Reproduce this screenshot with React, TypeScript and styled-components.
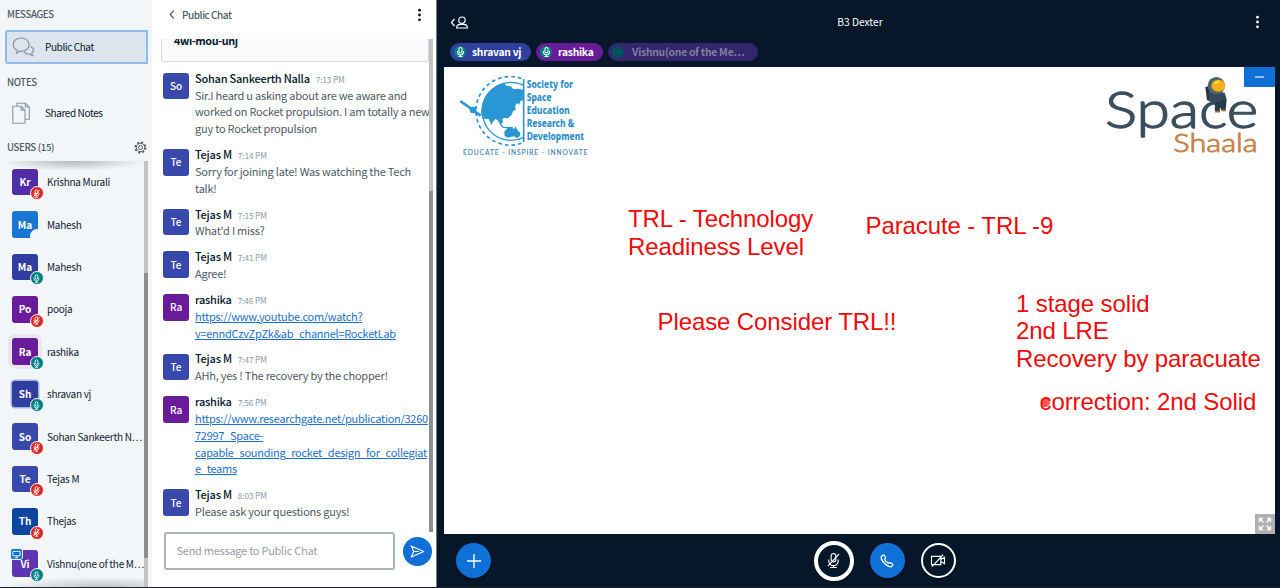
import React from 'react';
import styled, { createGlobalStyle, css } from 'styled-components';

const GlobalStyle = createGlobalStyle`
  * { box-sizing: border-box; }
  html, body { margin: 0; padding: 0; overflow: hidden; }
  body { background: #06172a; font-family: 'Noto Sans CJK SC', 'Noto Sans', sans-serif; }
  button { padding: 0; font: inherit; cursor: pointer; }
`;

const Shell = styled.div`
  display: flex;
  width: 1280px;
  height: 588px;
  overflow: hidden;
  border-bottom: 1px solid #1b2127;
`;

/* ---------- sidebar ---------- */

const Sidebar = styled.aside`
  display: flex;
  flex-direction: column;
  flex: none;
  width: 152px;
  background: #f3f6f9;
  color: #06172a;
`;

const SectionTitle = styled.h2<{ $top: number; $bottom?: number }>`
  display: flex;
  align-items: center;
  justify-content: space-between;
  flex: none;
  height: 16px;
  margin: ${(p) => p.$top}px 5px ${(p) => p.$bottom || 0}px 7px;
  font-size: 9.6px;
  font-weight: 500;
  line-height: 16px;
  letter-spacing: -0.33px;
  color: #4e5a66;
`;

const NavItem = styled.div<{ $active?: boolean }>`
  display: flex;
  align-items: center;
  gap: 10px;
  flex: none;
  height: 34px;
  margin: 0 4px 0 5px;
  padding-left: 5px;
  font-size: 10px;
  letter-spacing: -0.4px;
  line-height: 16px;
  border: 2px solid transparent;
  ${(p) => p.$active && css`
    background: #dce4ed;
    border-color: #8fbaea;
    border-radius: 3px 0 0 3px;
  `}
  svg { width: 23px; height: 24px; }
`;

const UserScroller = styled.div`
  display: flex;
  flex: 1;
  min-height: 0;
  margin-top: 6px;
  overflow: hidden;
  background:
    radial-gradient(farthest-side at 50% 0, rgba(0, 0, 0, 0.25), rgba(0, 0, 0, 0)) 0 0 / 146px 10px no-repeat,
    radial-gradient(farthest-side at 70% 100%, rgba(0, 0, 0, 0.2), rgba(0, 0, 0, 0)) 0 100% / 146px 10px no-repeat;
`;

const UserList = styled.div`
  flex: 1;
  min-width: 0;
`;

const UserRow = styled.div`
  display: flex;
  align-items: center;
  gap: 9px;
  height: 42.4px;
  padding-left: 12px;
`;

const UserName = styled.span`
  font-size: 10px;
  letter-spacing: -0.28px;
  line-height: 18px;
  white-space: nowrap;
  color: #0f2133;
`;

const Avatar = styled.div<{ $color: string; $halo?: string; $bold?: boolean }>`
  position: relative;
  display: flex;
  align-items: center;
  justify-content: center;
  flex: none;
  width: 26px;
  height: 26.6px;
  border-radius: 3px;
  background: ${(p) => p.$color};
  box-shadow: ${(p) => p.$halo || 'none'};
  color: #fff;
  font-size: 10px;
  font-weight: ${(p) => (p.$bold ? 700 : 500)};
  line-height: 18px;
`;

const AudioBadge = styled.span<{ $kind: string }>`
  position: absolute;
  right: -5.5px;
  bottom: -5px;
  display: flex;
  align-items: center;
  justify-content: center;
  width: 14px;
  height: 14px;
  border: 1px solid #f3f6f9;
  border-radius: 50%;
  background: ${(p) => ({ muted: '#df2721', live: '#008081', none: '#f3f6f9' } as Record<string, string>)[p.$kind]};
  svg { width: 9px; height: 9px; }
`;

const PresenterBadge = styled.span`
  position: absolute;
  left: -2px;
  top: -2px;
  display: flex;
  align-items: center;
  justify-content: center;
  width: 13px;
  height: 12px;
  border: 1px solid #f3f6f9;
  border-radius: 3px;
  background: #0f70d7;
  svg { width: 9px; height: 9px; }
`;

const Track = styled.div<{ $before: number; $thumb: number; $right: number }>`
  display: flow-root;
  flex: none;
  width: 4px;
  margin-right: ${(p) => p.$right}px;
  background: #c1c3c5;
  &::before {
    content: '';
    display: block;
    height: ${(p) => p.$thumb}px;
    margin-top: ${(p) => p.$before}px;
    background: #8c8e90;
  }
`;

/* ---------- chat ---------- */

const Chat = styled.section`
  display: flex;
  flex-direction: column;
  flex: none;
  width: 285px;
  background: #fff;
  border-right: 1px solid #6e7c87;
`;

const ChatHeader = styled.header`
  display: flex;
  align-items: center;
  flex: none;
  height: 39px;
  padding: 0 14px 10px 17px;
  font-size: 10px;
  font-weight: 500;
  letter-spacing: -0.45px;
  line-height: 16px;
  color: #4e5a66;
`;

const HeaderLabel = styled.span`
  flex: 1;
  margin-left: 7px;
`;

const ChatBody = styled.div`
  display: flex;
  flex: none;
  height: 493px;
  overflow: hidden;
`;

const MessageList = styled.div`
  flex: 1;
  min-width: 0;
  padding-left: 11px;
`;

const Welcome = styled.div`
  height: 23px;
  margin: 0 0 7.8px -2px;
  padding-left: 12px;
  overflow: hidden;
  background: #f9fbfc;
  border: 1px solid #d4d9df;
  border-top: 0;
  border-radius: 0 0 3px 3px;
  font-size: 10.8px;
  letter-spacing: -0.4px;
  font-weight: 700;
  line-height: 16px;
  color: #06172a;
`;

const WelcomeText = styled.div`
  margin-top: -7px;
`;

const Message = styled.article`
  display: flex;
  gap: 6px;
  margin-bottom: 9.1px;
  & > :first-child { margin-top: 3.1px; }
`;

const MessageContent = styled.div`
  width: 234px;
  line-height: 16.8px;
`;

const Sender = styled.div`
  display: flex;
  align-items: baseline;
  gap: 6px;
  height: 16.8px;
  font-size: 11px;
  font-weight: 500;
  letter-spacing: -0.24px;
  color: #06172a;
`;

const Time = styled.time`
  font-size: 8.3px;
  font-weight: 400;
  letter-spacing: -0.15px;
  color: #8b9aa8;
`;

const Line = styled.div<{ $link?: boolean }>`
  height: 16.8px;
  font-size: 11px;
  letter-spacing: ${(p) => (p.$link ? -0.27 : -0.23)}px;
  white-space: nowrap;
  color: ${(p) => (p.$link ? '#1b6fd0' : '#4e5a66')};
  text-decoration: ${(p) => (p.$link ? 'underline' : 'none')};
  text-underline-offset: 1px;
`;

const Composer = styled.div`
  display: flex;
  align-items: center;
  gap: 8px;
  height: 38px;
  padding-left: 11.5px;
`;

const Input = styled.div`
  width: 231px;
  height: 38px;
  padding-left: 11px;
  border: 2px solid #a7b3bd;
  border-radius: 3px;
  font-size: 11px;
  letter-spacing: -0.26px;
  line-height: 32px;
  color: #96a0a9;
`;

const SendButton = styled.button`
  display: flex;
  align-items: center;
  justify-content: center;
  width: 29px;
  height: 29px;
  border: 0;
  border-radius: 50%;
  background: #0f70d7;
`;

/* ---------- meeting area ---------- */

const Main = styled.main`
  display: flex;
  flex-direction: column;
  flex: 1;
  min-width: 0;
  background: #06172a;
`;

const TopBar = styled.header`
  display: flex;
  align-items: center;
  justify-content: space-between;
  flex: none;
  height: 43px;
  padding: 1px 20px 0 13px;
  font-size: 10.2px;
  line-height: 16px;
  color: #fff;
`;

const MeetingTitle = styled.span`
  margin-right: 4px;
`;

const Talkers = styled.div`
  display: flex;
  gap: 5px;
  height: 24px;
  padding-left: 13px;
`;

const Talker = styled.div<{ $color: string; $width: number; $dim?: boolean }>`
  display: flex;
  align-items: center;
  gap: 5px;
  width: ${(p) => p.$width}px;
  height: 18px;
  padding-left: 4px;
  border-radius: 9px;
  background: ${(p) => p.$color};
  color: ${(p) => (p.$dim ? '#82809c' : '#fff')};
  font-size: 10.3px;
  font-weight: 700;
  letter-spacing: -0.24px;
  line-height: 16px;
  white-space: nowrap;
`;

const TalkerIcon = styled.span<{ $dim?: boolean }>`
  display: flex;
  align-items: center;
  justify-content: center;
  width: 12px;
  height: 12px;
  margin-right: ${(p) => (p.$dim ? 3 : 1)}px;
  border-radius: 50%;
  background: ${(p) => (p.$dim ? '#03525b' : '#008081')};
  svg { width: 11px; height: 12px; }
`;

const Whiteboard = styled.div`
  position: relative;
  flex: none;
  width: 831px;
  height: 467px;
  margin-left: 7px;
  background: #fff;
`;

const Note = styled.div<{ $x: number; $y: number }>`
  position: absolute;
  left: ${(p) => p.$x}px;
  top: ${(p) => p.$y}px;
  font-family: 'Liberation Sans', Arial, sans-serif;
  font-size: 24px;
  line-height: 27.5px;
  letter-spacing: -0.1px;
  white-space: pre;
  color: #f00a0a;
`;

const Pointer = styled.span`
  position: absolute;
  left: 597px;
  top: 331px;
  width: 9px;
  height: 9px;
  border-radius: 50%;
  background: rgba(255, 30, 30, 0.75);
`;

const SocietyLogo = styled.svg`
  position: absolute;
  left: 6px;
  top: 3px;
  width: 150px;
  height: 95px;
`;

const ShaalaLogo = styled.svg`
  position: absolute;
  left: 656px;
  top: 3px;
  width: 162px;
  height: 90px;
`;

const Minimize = styled.button`
  position: absolute;
  right: 0;
  top: 0;
  display: flex;
  align-items: center;
  justify-content: center;
  width: 31px;
  height: 20px;
  border: 0;
  border-radius: 0 0 1px 1px;
  background: #0f70d7;
  &::before {
    content: '';
    width: 9px;
    height: 1.5px;
    background: #8fc0f0;
  }
`;

const Fullscreen = styled.button`
  position: absolute;
  right: 0;
  bottom: 0;
  display: flex;
  align-items: center;
  justify-content: center;
  width: 20px;
  height: 20px;
  border: 0;
  background: #b2b2b2;
`;

const ActionBar = styled.footer`
  display: grid;
  grid-template-columns: 1fr auto 1fr;
  align-items: center;
  flex: 1;
  padding: 0 16px 0 19px;
`;

const Media = styled.div`
  display: flex;
  align-items: center;
  gap: 16px;
  margin-left: 49px;
`;

const Round = styled.button<{ $kind: 'solid' | 'outline' | 'focus' }>`
  display: flex;
  align-items: center;
  justify-content: center;
  flex: none;
  width: ${(p) => (p.$kind === 'focus' ? 40 : 35)}px;
  height: ${(p) => (p.$kind === 'focus' ? 40 : 35)}px;
  border-radius: 50%;
  border: ${(p) => ({ solid: '0', outline: '2px solid #fff', focus: '4px solid #fff' })[p.$kind]};
  background: ${(p) => (p.$kind === 'solid' ? '#0f70d7' : 'transparent')};
  box-shadow: 0 1px 3px rgba(0, 0, 0, 0.5);
  svg { flex: none; }
`;

/* ---------- icons ---------- */

const MicIcon = ({ off }: { off?: boolean }) => (
  <svg viewBox="0 0 12 12" fill="none" stroke="#fff" strokeWidth="1.1">
    <rect x="4.3" y="1" width="3.4" height="6" rx="1.7" />
    <path d="M2.8 5v1a3.2 3.2 0 0 0 6.4 0V5M6 9.2v1.8M3.8 11h4.4" />
    {off && <path d="M2 10.5L10 1.5" strokeWidth="1.3" />}
  </svg>
);

const Dots = ({ color }: { color: string }) => (
  <svg width="5" height="14" viewBox="0 0 5 14" fill={color}>
    <circle cx="2.5" cy="2.2" r="1.4" /><circle cx="2.5" cy="7" r="1.4" /><circle cx="2.5" cy="11.8" r="1.4" />
  </svg>
);

const ChatIcon = () => (
  <svg viewBox="0 0 23 24" fill="none" stroke="#8796a5" strokeWidth="1.2">
    <path d="M4 18.5c1-.7 1.5-1.7 1.3-3C2.800 14.300 1.300 12.200 1.300 9.600 1.300 5.500 4.700 3 9.100 3s7.900 2.700 7.900 6.700-3.500 6.700-7.900 6.700c-.6 0-1.300 0-1.900-.2-.7 1.200-1.800 2-3.200 2.300z" />
    <path d="M18.500 11.500c1.800.7 2.900 1.900 2.900 3.700 0 1.300-.6 2.300-1.600 3-.1 1.100.3 1.800 1 2.500-1.300 0-2.200-.6-2.800-1.700-2.700.3-5-.5-5.800-2.300" />
  </svg>
);

const NotesIcon = () => (
  <svg viewBox="0 0 23 24" fill="none" stroke="#8796a5" strokeWidth="1.1">
    <path d="M5 7V2.300h8.500l3.800 3.700v12.300H13M13.300 2.500V6h3.800" />
    <path d="M.8 5.300h8.400l3.800 3.800v13.200H.8zM9.200 5.500v3.600H13" fill="#f3f6f9" />
  </svg>
);

const GearIcon = () => (
  <svg width="13" height="13" viewBox="0 0 13 13" fill="none" stroke="#4e5a66">
    <circle cx="6.500" cy="6.500" r="4.200" />
    <circle cx="6.500" cy="6.500" r="2" />
    <circle cx="6.500" cy="6.500" r="5.300" strokeWidth="1.400" strokeDasharray="2.100 2.060" />
  </svg>
);

const MonitorIcon = () => (
  <svg viewBox="0 0 10 10" fill="none" stroke="#fff">
    <path d="M1 1.500h8v5H1zM5 6.500v2M3 8.700h4" />
  </svg>
);

/* ---------- data ---------- */

type User = [initials: string, name: string, color: string, audio: string, halo?: string];

const users: User[] = [
  ['Kr', 'Krishna Murali', '#512da8', 'muted'],
  ['Ma', 'Mahesh', '#1976d2', 'none'],
  ['Ma', 'Mahesh', '#303f9f', 'live'],
  ['Po', 'pooja', '#6a1b9a', 'muted'],
  ['Ra', 'rashika', '#6a1b9a', 'live', '0 0 0 4px #e9e6f1'],
  ['Sh', 'shravan vj', '#303f9f', 'live', '0 0 0 1.5px #a9aedb'],
  ['So', 'Sohan Sankeerth N…', '#3949ab', 'muted'],
  ['Te', 'Tejas M', '#3949ab', 'muted'],
  ['Th', 'Thejas', '#0d47a1', 'muted'],
  ['Vi', 'Vishnu(one of the M…', '#5e35b1', 'live'],
];

type Msg = { who: string; time: string; lines: string[]; link?: boolean };

const messages: Msg[] = [
  { who: 'Sohan Sankeerth Nalla', time: '7:13 PM', lines: ['Sir.I heard u asking about are we aware and', 'worked on Rocket propulsion. I am totally a new', 'guy to Rocket propulsion'] },
  { who: 'Tejas M', time: '7:14 PM', lines: ['Sorry for joining late! Was watching the Tech', 'talk!'] },
  { who: 'Tejas M', time: '7:15 PM', lines: ["What'd I miss?"] },
  { who: 'Tejas M', time: '7:41 PM', lines: ['Agree!'] },
  { who: 'rashika', time: '7:46 PM', link: true, lines: ['https://www.youtube.com/watch?', 'v=enndCzvZpZk&ab_channel=RocketLab'] },
  { who: 'Tejas M', time: '7:47 PM', lines: ['AHh, yes ! The recovery by the chopper!'] },
  { who: 'rashika', time: '7:56 PM', link: true, lines: ['https://www.researchgate.net/publication/3260', '72997_Space-', 'capable_sounding_rocket_design_for_collegiat', 'e_teams'] },
  { who: 'Tejas M', time: '8:03 PM', lines: ['Please ask your questions guys!'] },
];

const societyWords: [string, number, number][] = [
  ['Society for', 55, 139],
  ['Space', 94, 75],
  ['Education', 132, 129],
  ['Research &', 171, 143],
  ['Development', 209, 172],
];

export default function App() {
  return (
    <Shell>
      <GlobalStyle />
      <Sidebar>
        <SectionTitle $top={6} $bottom={8}>MESSAGES</SectionTitle>
        <NavItem $active><ChatIcon />Public Chat</NavItem>
        <SectionTitle $top={10} $bottom={6}>NOTES</SectionTitle>
        <NavItem><NotesIcon />Shared Notes</NavItem>
        <SectionTitle $top={9}>USERS (15)<GearIcon /></SectionTitle>
        <UserScroller>
          <UserList>
            {users.map(([initials, name, color, audio, halo]) => (
              <UserRow key={name + audio}>
                <Avatar $color={color} $halo={halo} $bold>
                  {initials}
                  {initials === 'Vi' && <PresenterBadge><MonitorIcon /></PresenterBadge>}
                  <AudioBadge $kind={audio}>{audio !== 'none' && <MicIcon off={audio === 'muted'} />}</AudioBadge>
                </Avatar>
                <UserName>{name}</UserName>
              </UserRow>
            ))}
          </UserList>
          <Track $before={112} $thumb={285} $right={4} />
        </UserScroller>
      </Sidebar>

      <Chat>
        <ChatHeader>
          <svg width="6" height="9" viewBox="0 0 6 9" fill="none" stroke="#4e5a66" strokeWidth="1.200"><path d="M4.800.7L1.200 4.500l3.600 3.800" /></svg>
          <HeaderLabel>Public Chat</HeaderLabel>
          <Dots color="#06172a" />
        </ChatHeader>
        <ChatBody>
          <MessageList>
            <Welcome><WelcomeText>4wi-mou-unj</WelcomeText></Welcome>
            {messages.map((m) => (
              <Message key={m.time}>
                <Avatar $color={m.who === 'rashika' ? '#6a1b9a' : '#3949ab'}>{m.who === 'rashika' ? 'Ra' : m.who.slice(0, 2)}</Avatar>
                <MessageContent>
                  <Sender>{m.who}<Time>{m.time}</Time></Sender>
                  {m.lines.map((l) => <Line key={l} $link={m.link}>{l}</Line>)}
                </MessageContent>
              </Message>
            ))}
          </MessageList>
          <Track $before={152} $thumb={341} $right={3} />
        </ChatBody>
        <Composer>
          <Input>Send message to Public Chat</Input>
          <SendButton>
            <svg width="15" height="13" viewBox="0 0 15 13" fill="none" stroke="#fff" strokeWidth="1.100" strokeLinejoin="round"><path d="M1.200 1l12.500 5.500L1.200 12l2.600-5.500zM3.800 6.500h5" /></svg>
          </SendButton>
        </Composer>
      </Chat>

      <Main>
        <TopBar>
          <svg width="19" height="13" viewBox="0 0 19 13" fill="none" stroke="#fff" strokeWidth="1.200">
            <path d="M4.500 3L1.500 6.500l3 3.500" />
            <circle cx="12" cy="4.200" r="3.200" />
            <path d="M6.600 12c0-2.600 1.700-3.700 3.600-3.700h3.600c1.900 0 3.600 1.100 3.600 3.700z" />
          </svg>
          <MeetingTitle>B3 Dexter</MeetingTitle>
          <Dots color="#fff" />
        </TopBar>
        <Talkers>
          <Talker $color="#303f9f" $width={81}><TalkerIcon><MicIcon /></TalkerIcon>shravan vj</Talker>
          <Talker $color="#6a1b9a" $width={67}><TalkerIcon><MicIcon /></TalkerIcon>rashika</Talker>
          <Talker $color="#32266e" $width={150} $dim><TalkerIcon $dim />Vishnu(one of the Me…</Talker>
        </Talkers>

        <Whiteboard>
          <SocietyLogo viewBox="0 0 450 285">
            <g fill="none" stroke="#2897d3">
              <path d="M214 25A103 103 0 1 0 214 220" strokeWidth="5" strokeDasharray="11 9" />
              <path d="M222 46A87 87 0 1 0 222 202" strokeWidth="4" />
              <path d="M221 27V216" strokeWidth="5" />
              <path d="M31 93L92 137" strokeWidth="8" />
              <path d="M148 150l4 14 8 8 22 2" strokeWidth="4" />
            </g>
            <g fill="#2897d3">
              <circle cx="69" cy="120" r="10" />
              <path d="M95 138A87 87 0 0 1 151 43l11-3 8 8 12 1 8 9 14-2 17 4V91l-9 1-5 12-7-5-5 11 3 9-8 3-6 14-11 9-12-1-4 4 2 8-7 8-9-13-7-4-8 10-3 8-9-18-15-1z" />
              <path d="M163 184l7-6 5-8 12 1 5 7 5-9 5 11 8 8 1 8-8 8-13-5-16 4-10-5z" />
            </g>
            <g fill="#2c8fc9" fontFamily="'Noto Sans', sans-serif" fontWeight="800" fontSize="29">
              {societyWords.map(([w, y, len]) => <text key={w} x="230" y={y} textLength={len} lengthAdjust="spacingAndGlyphs">{w}</text>)}
            </g>
            <text x="39" y="254" textLength="373" fill="#4488ae" fontFamily="Lato, sans-serif" fontWeight="400" stroke="#4488ae" strokeWidth="0.400" fontSize="20">EDUCATE - INSPIRE - INNOVATE</text>
          </SocietyLogo>

          <ShaalaLogo viewBox="60 210 486 270">
            <text x="75" y="385" textLength="460" lengthAdjust="spacingAndGlyphs" fill="#3b4f5d" stroke="#3b4f5d" strokeWidth="4" strokeLinejoin="round" fontFamily="Lato, sans-serif" fontWeight="300" fontSize="152">Space</text>
            <text x="280" y="455" textLength="253" lengthAdjust="spacingAndGlyphs" fill="#c98247" stroke="#c98247" strokeWidth="2.500" strokeLinejoin="round" fontFamily="Lato, sans-serif" fontWeight="300" fontSize="74">Shaala</text>
            <path d="M376 261l14-3 4 48-13-6z" fill="#26323e" />
            <path d="M386 270l48 8 6 20-2 24-30 4-4-16-18-8z" fill="#34495c" />
            <path d="M412 306v27M430 300v30" stroke="#263849" strokeWidth="15" />
            <path d="M405 335h15M424 331h14" stroke="#a86745" strokeWidth="5" />
            <circle cx="409" cy="257" r="26" fill="#4d646b" />
            <ellipse cx="415" cy="257" rx="21" ry="18" fill="#f5ae17" />
            <path d="M404 252q5-8 14-6" stroke="#ffe05a" strokeWidth="5" fill="none" />
          </ShaalaLogo>

          <Note $x={184} $y={138}>{'TRL - Technology\nReadiness Level'}</Note>
          <Note $x={421.5} $y={144.500}>Paracute - TRL -9</Note>
          <Note $x={213.5} $y={241}>Please Consider TRL!!</Note>
          <Note $x={572} $y={222.9}>{'1 stage solid\n2nd LRE\nRecovery by paracuate'}</Note>
          <Note $x={595.5} $y={321.4}>correction: 2nd Solid</Note>
          <Pointer />
          <Minimize aria-label="Minimize" />
          <Fullscreen>
            <svg width="14" height="14" viewBox="0 0 14 14" fill="none" stroke="#fff" strokeWidth="1.300">
              <path d="M1.500 5V1.500H5M1.500 1.500l4 4M9 1.500h3.500V5M12.500 1.500l-4 4M1.500 9v3.500H5M1.500 12.500l4-4M12.500 9v3.500H9M12.500 12.500l-4-4" />
            </svg>
          </Fullscreen>
        </Whiteboard>

        <ActionBar>
          <Round $kind="solid"><svg width="16" height="16" viewBox="0 0 16 16" stroke="#fff" strokeWidth="1.400"><path d="M8 1v14M1 8h14" /></svg></Round>
          <Media>
            <Round $kind="focus">
              <svg width="15" height="17" viewBox="0 0 16 18" fill="none" stroke="#fff" strokeWidth="1.200">
                <rect x="5.500" y="1.500" width="5" height="9" rx="2.500" />
                <path d="M3 8v1.500a5 5 0 0 0 10 0V8M8 14.500v2M4.500 16.500h7M2 15L14 2" />
              </svg>
            </Round>
            <Round $kind="solid">
              <svg width="14" height="14" viewBox="0 0 14 14" fill="none" stroke="#fff" strokeWidth="1.300" strokeLinejoin="round">
                <path d="M2 1.800c1-.9 2.200-.7 2.700.2l.7 1.500c.3.900-.5 1.300-.7 1.900.4 1.500 2.100 3.300 3.700 3.800.7-.1 1.200-.9 2-.6l1.600.9c.9.600.9 1.700.1 2.500-.9.900-2.500.8-3.900.1C5.100 10.500 2.800 8 1.600 5.300 1 3.900 1 2.700 2 1.800z" />
              </svg>
            </Round>
            <Round $kind="outline">
              <svg width="16" height="13" viewBox="0 0 17 14" fill="none" stroke="#fff" strokeWidth="1.200">
                <path d="M1.500 2.500h10v9h-10zM11.500 6l4-2.500v7l-4-2.500M2 13.500L14 .8" />
              </svg>
            </Round>
          </Media>
        </ActionBar>
      </Main>
    </Shell>
  );
}
